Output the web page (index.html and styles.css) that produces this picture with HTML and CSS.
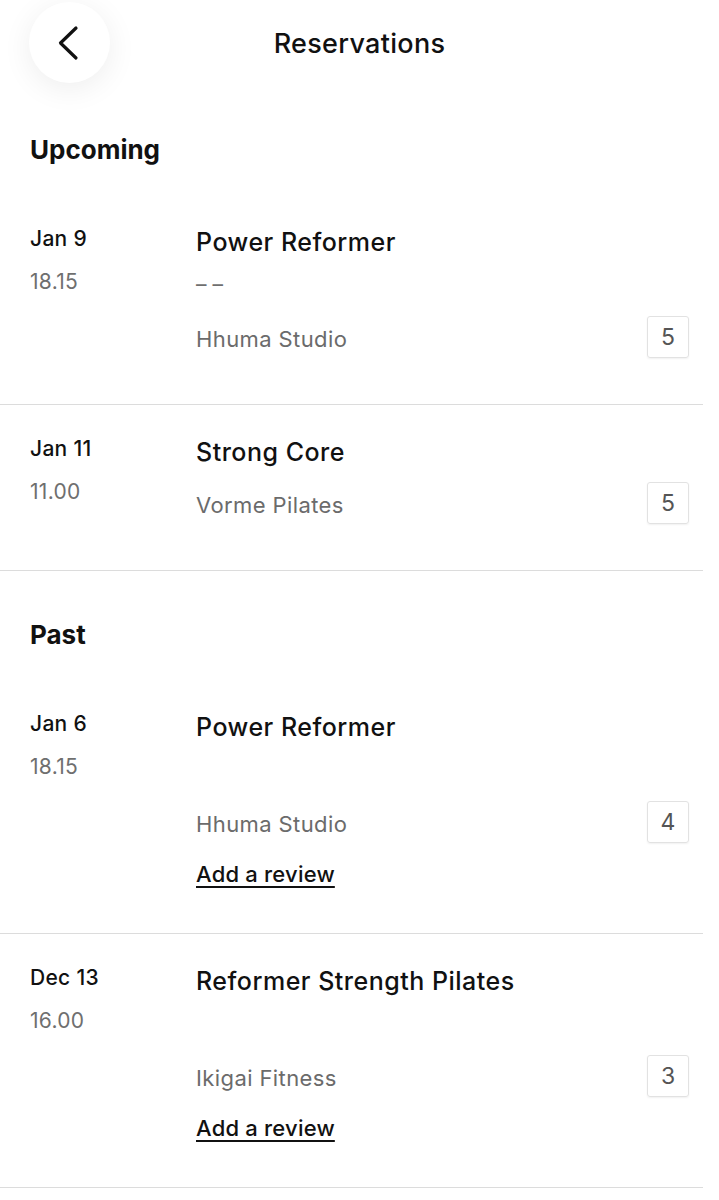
FILE: index.html
```html
<!DOCTYPE html>
<html lang="en">

<head>
    <meta charset="UTF-8">
    <meta name="viewport" content="width=device-width, initial-scale=1.0">
    <title>Reservations</title>
    <link rel="stylesheet" href="styles.css">
</head>

<body>
    <header class="topbar">
        <div class="topbar-left">
            <button class="back-btn" aria-label="Back">
                <svg width="81" height="81" viewBox="0 0 81 81">
                    <polyline points="47,26 31.5,41 47,56" fill="none" stroke="#111" stroke-width="3.2"
                        stroke-linecap="round" stroke-linejoin="round" />
                </svg>
            </button>
        </div>
        <h1 class="topbar-title">Reservations</h1>
        <div></div>
    </header>

    <section class="group">
        <h2 class="group-title">Upcoming</h2>

        <div class="row">
            <div class="when">
                <div class="date">Jan 9</div>
                <div class="time">18.15</div>
            </div>
            <div class="info">
                <div class="name">Power Reformer</div>
                <div class="note">– –</div>
                <div class="place">
                    <span class="studio">Hhuma Studio</span>
                    <span class="badge">5</span>
                </div>
            </div>
        </div>

        <div class="row">
            <div class="when">
                <div class="date">Jan 11</div>
                <div class="time">11.00</div>
            </div>
            <div class="info">
                <div class="name">Strong Core</div>
                <div class="place">
                    <span class="studio">Vorme Pilates</span>
                    <span class="badge">5</span>
                </div>
            </div>
        </div>
    </section>

    <section class="group">
        <h2 class="group-title">Past</h2>

        <div class="row">
            <div class="when">
                <div class="date">Jan 6</div>
                <div class="time">18.15</div>
            </div>
            <div class="info">
                <div class="name">Power Reformer</div>
                <div class="note"></div>
                <div class="place">
                    <span class="studio">Hhuma Studio</span>
                    <span class="badge">4</span>
                </div>
                <a class="review" href="#">Add a review</a>
            </div>
        </div>

        <div class="row">
            <div class="when">
                <div class="date">Dec 13</div>
                <div class="time">16.00</div>
            </div>
            <div class="info">
                <div class="name">Reformer Strength Pilates</div>
                <div class="note"></div>
                <div class="place">
                    <span class="studio">Ikigai Fitness</span>
                    <span class="badge">3</span>
                </div>
                <a class="review" href="#">Add a review</a>
            </div>
        </div>
    </section>
</body>

</html>
```

FILE: styles.css
```css
body {
    font-family: Inter, "Open Sans", sans-serif;
    margin: 0;
    background-color: #ffffff;
    color: #111111;
}

.topbar {
    display: grid;
    grid-template-columns: 1fr auto 1fr;
    height: 86px;
}

.topbar-left {
    padding: 2px 0 0 29px;
}

.back-btn {
    width: 81px;
    height: 81px;
    padding: 0;
    border: none;
    border-radius: 50%;
    background-color: #ffffff;
    box-shadow: 0 6px 30px rgba(0, 0, 0, 0.07);
    display: block;
}

.back-btn svg {
    display: block;
}

.topbar-title {
    margin: 0;
    padding-top: 28px;
    font-size: 27px;
    line-height: 32px;
    font-weight: 500;
    letter-spacing: 0.3px;
}

.group-title {
    margin: 0;
    padding: 48px 30px 0;
    margin-bottom: 29px;
    font-size: 26px;
    line-height: 32px;
    font-weight: 700;
}

.row {
    display: flex;
    padding: 32px 14px 46px 30px;
    margin-right: 16px;
    border-bottom: 1px solid #dcdcdc;
}

.when {
    width: 166px;
    flex-shrink: 0;
}

.date {
    font-size: 21px;
    line-height: 24px;
    font-weight: 500;
    letter-spacing: 0.3px;
}

.time {
    margin-top: 19px;
    font-size: 21px;
    line-height: 24px;
    letter-spacing: 0.3px;
    color: #6f6f6f;
}

.info {
    flex: 1;
}

.name {
    font-size: 25px;
    line-height: 30px;
    font-weight: 500;
    letter-spacing: 0.5px;
}

.note {
    height: 32px;
    padding-top: 12px;
    font-size: 21px;
    line-height: 32px;
    color: #6f6f6f;
}

.place {
    display: flex;
    justify-content: space-between;
    align-items: center;
    margin-top: 15px;
}

.studio {
    padding-top: 4px;
    font-size: 22px;
    line-height: 26px;
    letter-spacing: 0.4px;
    color: #6b6b6b;
}

.badge {
    width: 40px;
    height: 40px;
    border: 1px solid #e2e2e2;
    border-radius: 3px;
    box-shadow: 0 1px 2px rgba(0, 0, 0, 0.06);
    display: flex;
    align-items: center;
    justify-content: center;
    font-size: 23px;
    color: #555555;
}

.review {
    display: inline-block;
    margin-top: 18px;
    font-size: 22px;
    line-height: 26px;
    font-weight: 500;
    letter-spacing: 0.2px;
    color: #111111;
    text-decoration: underline;
    text-decoration-thickness: 2px;
    text-underline-offset: 4px;
}
```
